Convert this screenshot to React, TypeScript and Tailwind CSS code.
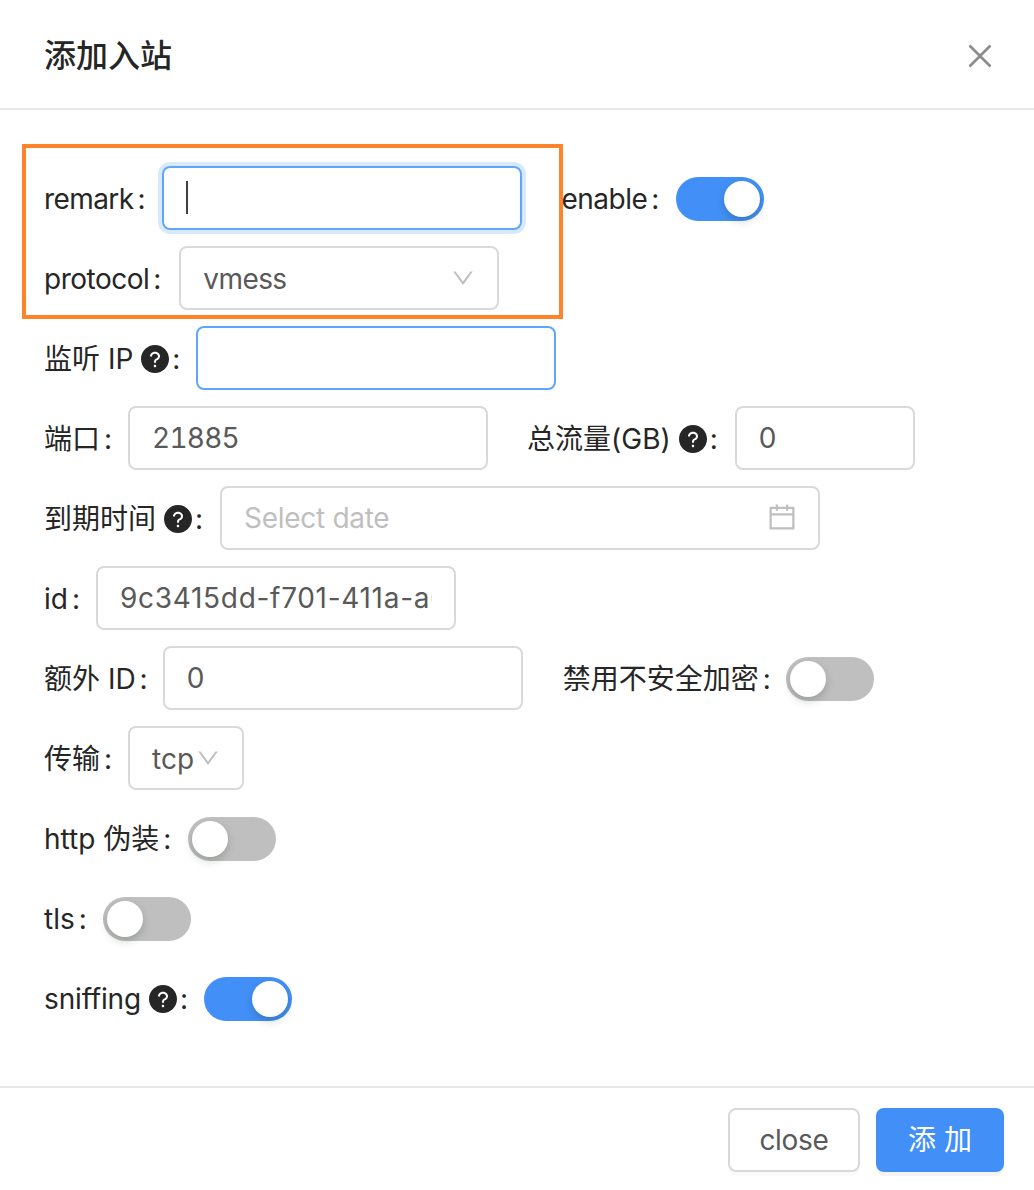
import { AiFillQuestionCircle, AiOutlineCalendar, AiOutlineClose, AiOutlineDown } from "react-icons/ai"

const FONT = "font-['Inter','Noto_Sans_CJK_SC',sans-serif]"

function Help() {
  return <AiFillQuestionCircle size={32} className="ml-1.5 -mr-[3px] text-[#262626]" />
}

interface LabelProps {
  text: string
  help?: boolean
  tracking?: string
  gap?: string
}

function Label({ text, help, tracking, gap }: LabelProps) {
  return (
    <span className="flex items-center pt-0.5 text-[28px] leading-none whitespace-nowrap text-[#262626]">
      <span className={tracking}>{text}</span>
      {help && <Help />}
      <span className={`ml-1 ${gap ?? "mr-4"}`}>:</span>
    </span>
  )
}

interface TextBoxProps {
  width: string
  value?: string
  focus?: boolean
  placeholder?: string
  extra?: string
}

function TextBox({ width, value, focus, placeholder, extra }: TextBoxProps) {
  return (
    <input
      readOnly
      value={value ?? ""}
      placeholder={placeholder}
      className={`h-16 rounded-lg border-2 bg-white px-[22px] text-[28px] text-[#595959] outline-none placeholder:text-[#bfbfbf] ${width} ${extra ?? ""} ${
        focus ? "border-[#5fa6f9]" : "border-[#d9d9d9]"
      }`}
    />
  )
}

function Select({ width, value, tracking }: { width: string; value: string; tracking?: string }) {
  return (
    <div className={`flex h-16 items-center justify-between rounded-lg border-2 border-[#d9d9d9] bg-white pl-[22px] text-[28px] text-[#595959] ${width}`}>
      <span className={`pt-0.5 ${tracking ?? ""}`}>{value}</span>
      <AiOutlineDown size={26} className="text-[#bfbfbf]" />
    </div>
  )
}

function Toggle({ on }: { on?: boolean }) {
  return (
    <div className={`mt-0.5 flex h-11 w-[88px] items-center rounded-full p-1 ${on ? "justify-end bg-[#4290f7]" : "justify-start bg-[#bfbfbf]"}`}>
      <div className="size-9 rounded-full bg-white shadow-[0_4px_8px_rgba(0,35,11,0.2)]" />
    </div>
  )
}

function Row({ children }: { children: React.ReactNode }) {
  return <div className="mb-4 flex h-16 items-center">{children}</div>
}

export default function App() {
  return (
    <div className={`relative flex h-[1190px] w-full flex-col bg-white ${FONT}`}>
      <header className="flex h-[110px] items-center justify-between border-b-2 border-[#e8e8e8] pl-11 pr-[37px] pt-1">
        <h1 className="text-[32px] font-medium text-[#262626]">添加入站</h1>
        <AiOutlineClose size={34} className="text-[#8c8c8c]" />
      </header>

      <main className="flex-1 pl-11 pt-14">
        <Row>
          <Label text="remark" tracking="tracking-[-0.6px]" gap="mr-[17px]" />
          <div className="relative mr-[39px] rounded-lg shadow-[0_0_0_4px_rgba(66,144,247,0.2)]">
            <TextBox width="w-[360px]" focus />
            <div className="absolute left-6 top-[15px] h-[33px] w-0.5 bg-[#404040]" />
          </div>
          <Label text="enable" tracking="tracking-[-0.5px]" gap="mr-[17px]" />
          <Toggle on />
        </Row>
        <Row>
          <Label text="protocol" tracking="tracking-[-0.5px]" gap="mr-[18px]" />
          <Select width="w-80 pr-[21px]" value="vmess" tracking="tracking-[-0.6px]" />
        </Row>
        <Row>
          <Label text="监听 IP" help />
          <TextBox width="w-[360px]" focus />
        </Row>
        <Row>
          <Label text="端口" />
          <div className="mr-[39px]">
            <TextBox width="w-[360px]" value="21885" extra="tabular-nums tracking-[-0.8px]" />
          </div>
          <Label text="总流量(GB)" help gap="mr-[17px]" />
          <TextBox width="w-[180px]" value="0" />
        </Row>
        <Row>
          <Label text="到期时间" help gap="mr-[17px]" />
          <div className="relative">
            <TextBox width="w-[600px]" placeholder="Select date" extra="tracking-[-0.3px]" />
            <AiOutlineCalendar size={32} className="absolute right-[22px] top-[15px] text-[#bfbfbf]" />
          </div>
        </Row>
        <Row>
          <Label text="id" />
          <TextBox width="w-[360px]" value="9c3415dd-f701-411a-a6b2-7e4d10c95f38" extra="tracking-[0.7px]" />
        </Row>
        <Row>
          <Label text="额外 ID" gap="mr-[15px]" />
          <div className="mr-10">
            <TextBox width="w-[360px]" value="0" />
          </div>
          <Label text="禁用不安全加密" gap="mr-[15px]" />
          <Toggle />
        </Row>
        <Row>
          <Label text="传输" />
          <Select width="w-[116px] pr-[21px]" value="tcp" />
        </Row>
        <Row>
          <Label text="http 伪装" gap="mr-[17px]" />
          <Toggle />
        </Row>
        <Row>
          <Label text="tls" />
          <Toggle />
        </Row>
        <Row>
          <Label text="sniffing" help tracking="tracking-[-0.15px]" />
          <Toggle on />
        </Row>
      </main>

      <footer className="flex h-[104px] justify-end gap-4 border-t-2 border-[#e8e8e8] pr-[30px] pt-5">
        <button className="h-16 w-[132px] rounded-lg border-2 border-[#d9d9d9] bg-white text-[28px] tracking-[-0.3px] text-[#595959] shadow-[0_4px_0_rgba(0,0,0,0.015)]">close</button>
        <button className="h-16 w-32 rounded-lg bg-[#4290f7] text-[28px] text-white shadow-[0_4px_0_rgba(0,0,0,0.045)]">添 加</button>
      </footer>

      {/* annotation box drawn over the first two rows */}
      <div className="pointer-events-none absolute left-[22px] top-[144px] h-[175px] w-[541px] border-4 border-[#ff8329]" />
    </div>
  )
}
